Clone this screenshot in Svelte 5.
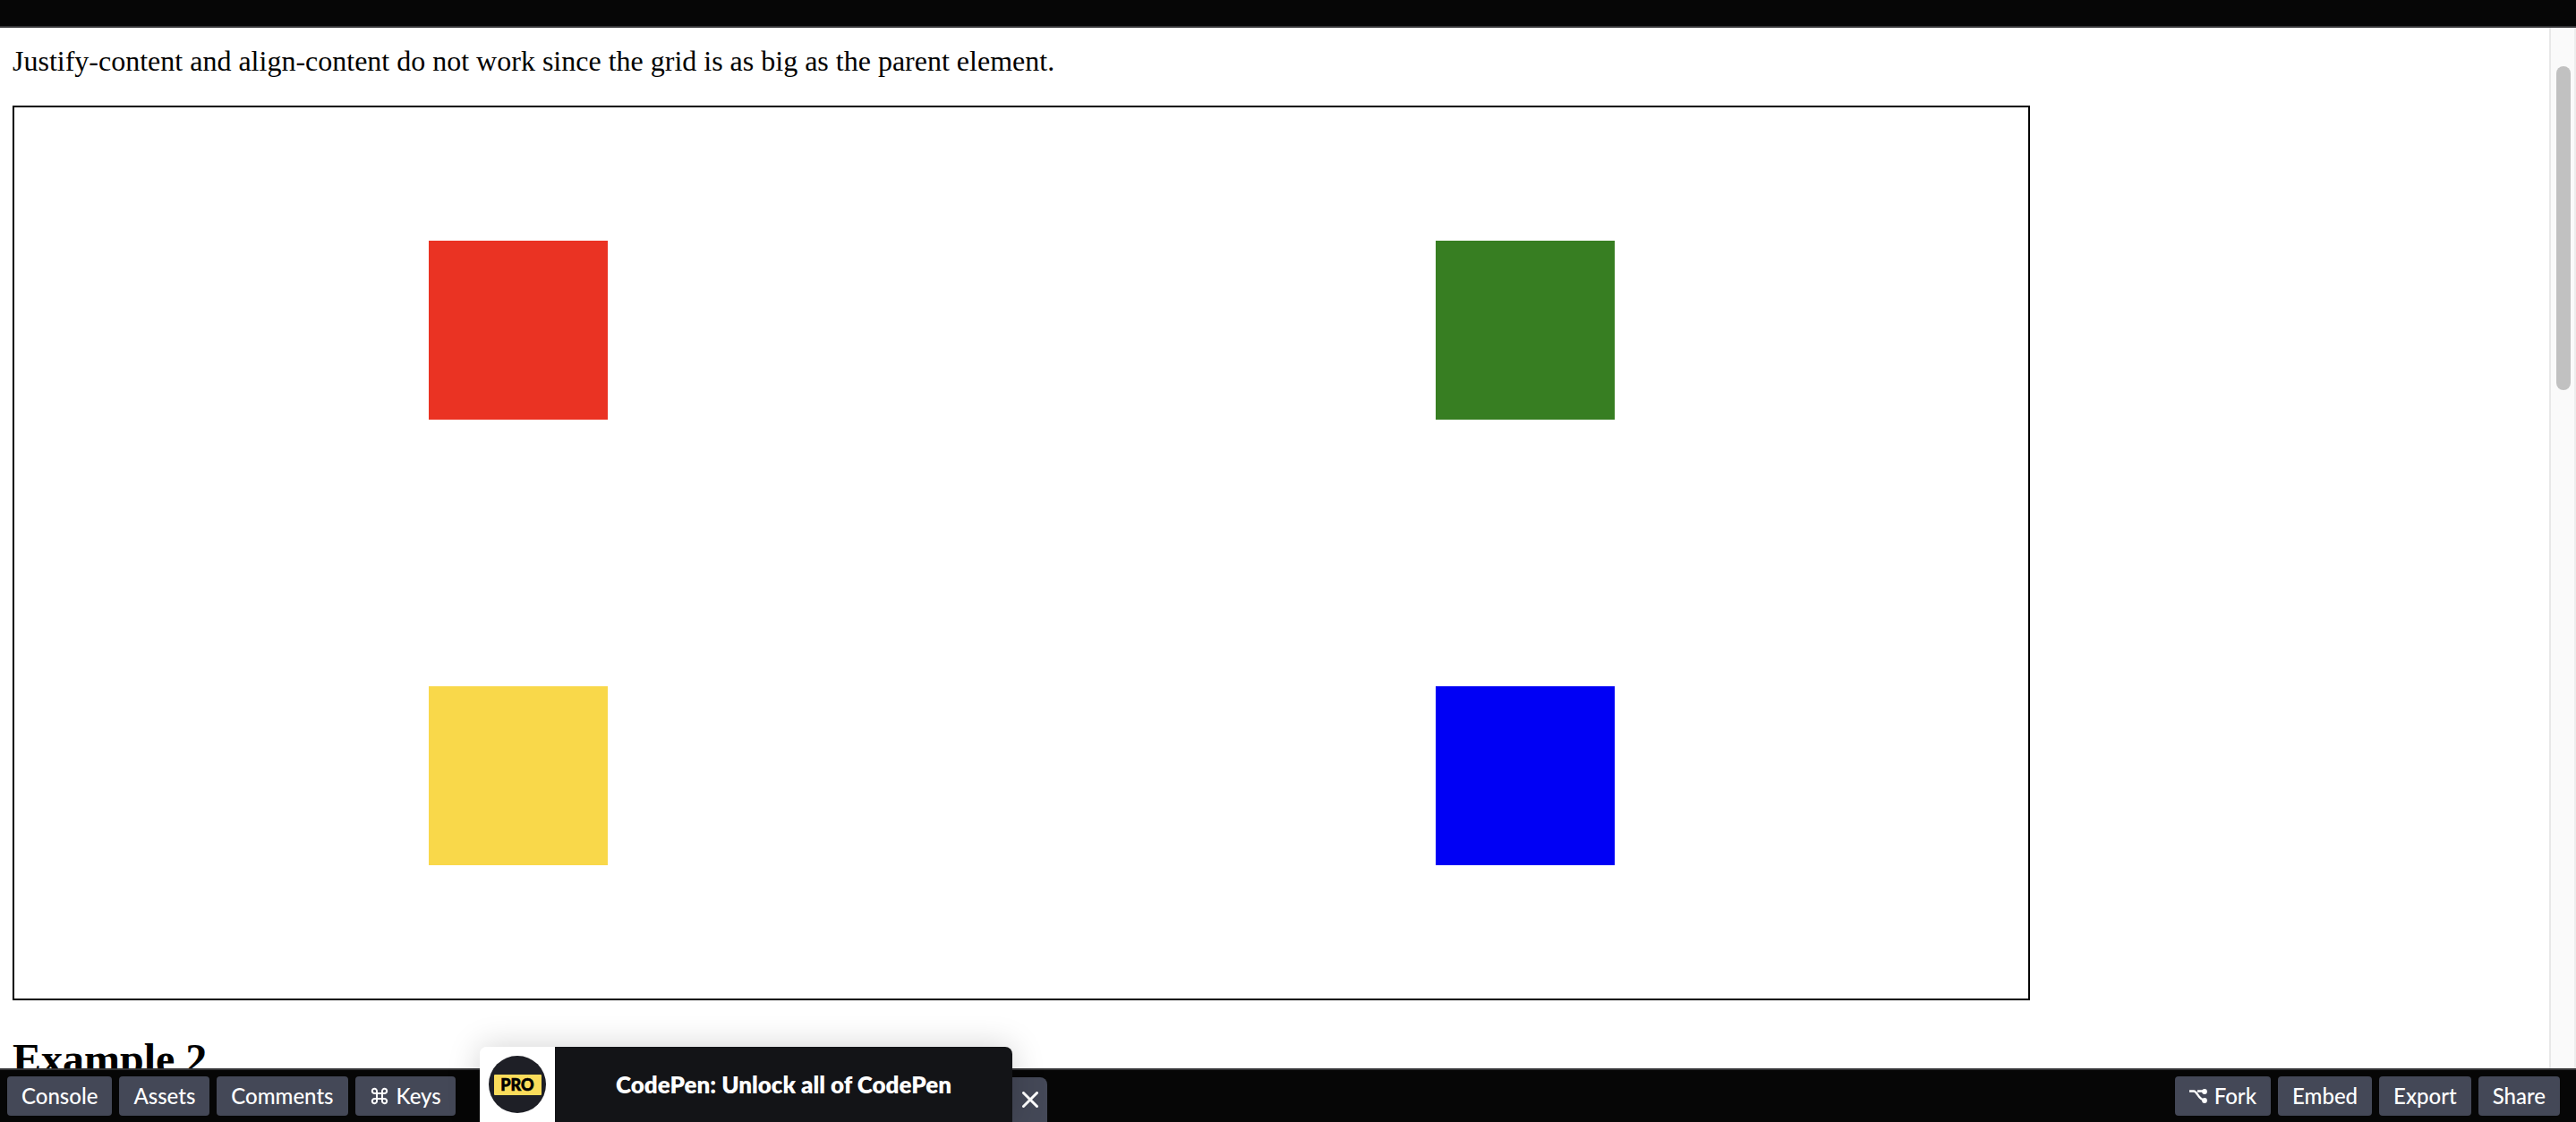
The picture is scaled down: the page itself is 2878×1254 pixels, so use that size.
<script>
  const squares = ['red', 'green', 'yellow', 'blue'];
  const panels = ['Console', 'Assets', 'Comments'];
  const actions = ['Embed', 'Export', 'Share'];
</script>

<div class="app">
  <header></header>

  <div class="preview">
    <main>
      <p>Justify-content and align-content do not work since the grid is as big as the parent element.</p>
      <div class="grid">
        {#each squares as name}
          <div class="square {name}"></div>
        {/each}
      </div>
      <h2>Example 2</h2>
    </main>
    <div class="scrollbar"><div class="thumb"></div></div>
  </div>

  <footer>
    <div class="group">
      {#each panels as label}
        <button type="button">{label}</button>
      {/each}
      <button type="button">
        <svg class="keys" viewBox="-1 0 22 20" width="22" height="20" aria-hidden="true">
          <path d="M7 7H13V13H7Z M7 7H4.500A2.600 2.600 0 1 1 7 4.500Z M13 7V4.500A2.600 2.600 0 1 1 15.500 7Z M13 13H15.500A2.600 2.600 0 1 1 13 15.500Z M7 13V15.500A2.600 2.600 0 1 1 4.500 13Z" />
        </svg>
        Keys
      </button>
    </div>

    <div class="group">
      <button type="button">
        <svg viewBox="0 0 20 16" width="20" height="16" aria-hidden="true">
          <path d="M0 2.500H5C9 2.500 10 12.500 17 12.500M9 2.500H17" fill="none" stroke="#fff" stroke-width="2.400" />
          <circle cx="17" cy="3" r="2.900" fill="#fff" />
          <circle cx="17" cy="13" r="2.900" fill="#fff" />
        </svg>
        Fork
      </button>
      {#each actions as label}
        <button type="button">{label}</button>
      {/each}
    </div>

    <aside class="promo">
      <a href="#pro">
        <span class="logo">
          <svg viewBox="0 0 64 64" width="64" height="64" aria-hidden="true">
            <circle cx="32" cy="32" r="32" fill="#1e1f26" />
            <rect x="6" y="21" width="53" height="23" rx="1" fill="#fadc5b" />
            <text x="32" y="39" text-anchor="middle">PRO</text>
          </svg>
        </span>
        <span class="message">CodePen: Unlock all of CodePen</span>
      </a>
      <button type="button" class="close" aria-label="Close">
        <svg viewBox="0 0 18 18" width="18" height="18" aria-hidden="true">
          <path d="M1.500 1.500L16.500 16.500M16.500 1.500L1.500 16.500" />
        </svg>
      </button>
    </aside>
  </footer>
</div>

<style>
  :global(body) {
    margin: 0;
  }

  .app {
    display: flex;
    flex-direction: column;
    height: 100vh;
    overflow: hidden;
    background: #fff;
    color: #000;
  }

  header {
    flex: none;
    height: 29px;
    background: #060606;
    border-bottom: 2px solid #343436;
  }

  .preview {
    flex: 1;
    min-height: 0;
    display: flex;
    overflow: hidden;
  }

  main {
    flex: 1;
    padding: 19px 16px 0 14px;
    font-family: "Liberation Serif", "Times New Roman", serif;
  }

  p {
    margin: 0 0 31px;
    font-size: 32px;
    line-height: 37px;
  }

  .grid {
    box-sizing: border-box;
    display: grid;
    grid-template-columns: 1fr 1fr;
    grid-template-rows: 1fr 1fr;
    place-items: center;
    width: 80%;
    height: 1000px;
    border: 2px solid #000;
  }

  .square {
    width: 200px;
    height: 200px;
  }

  .red { background: #ea3323; }
  .green { background: #377e22; }
  .yellow { background: #f9d84a; }
  .blue { background: #0000f5; }

  h2 {
    margin: 38px 0 0;
    font-size: 48px;
    line-height: 55px;
  }

  .scrollbar {
    box-sizing: border-box;
    width: 30px;
    padding: 43px 4px 0 6px;
    background: #fafafa;
    border-left: 2px solid #e8e8e8;
    border-right: 2px solid #ededed;
  }

  .thumb {
    width: 16px;
    height: 362px;
    border-radius: 8px;
    background: #c1c1c1;
  }

  footer {
    flex: none;
    position: relative;
    box-sizing: border-box;
    display: flex;
    justify-content: space-between;
    height: 60px;
    padding: 7px 18px 7px 8px;
    background: #060606;
    border-top: 2px solid #343436;
    font-family: Lato, "Liberation Sans", sans-serif;
  }

  .group {
    display: flex;
    gap: 8px;
  }

  button {
    display: flex;
    align-items: center;
    gap: 8px;
    height: 44px;
    padding: 0 16px;
    border: 0;
    border-radius: 4px;
    background: #444857;
    color: #fff;
    font: 500 24px/44px Lato, "Liberation Sans", sans-serif;
  }

  .keys {
    fill: none;
    stroke: #fff;
    stroke-width: 2;
  }

  .promo {
    position: absolute;
    left: 536px;
    bottom: 0;
    display: flex;
    align-items: flex-end;
  }

  .promo a {
    position: relative;
    z-index: 1;
    display: flex;
    height: 84px;
    border-radius: 8px 8px 0 0;
    overflow: hidden;
    box-shadow: 0 0 36px rgba(0, 0, 0, 0.18);
    color: #fff;
    text-decoration: none;
  }

  .logo {
    display: grid;
    place-items: center;
    width: 84px;
    background: #fff;
  }

  .logo text {
    font: 900 18px Lato, sans-serif;
    fill: #000;
    stroke: #000;
    stroke-width: 0.6;
  }

  .message {
    width: 511px;
    background: #131417;
    font-size: 26px;
    font-weight: 800;
    line-height: 84px;
    text-align: center;
  }

  .close {
    height: 50px;
    padding: 0 10px 0 11px;
    border-radius: 0 8px 0 0;
  }

  .close path {
    fill: none;
    stroke: #fff;
    stroke-width: 3;
    stroke-linecap: round;
  }
</style>
